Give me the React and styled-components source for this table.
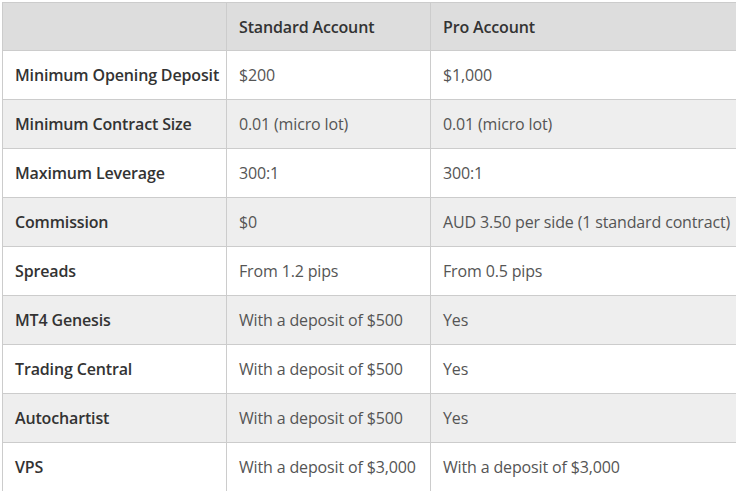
import React from "react";
import styled, { createGlobalStyle } from "styled-components";

const GlobalStyle = createGlobalStyle`
  html, body {
    margin: 0;
    padding: 0;
    background: #fff;
    overflow: hidden;
  }
  body {
    font-family: "Open Sans", "Liberation Sans", sans-serif;
  }
`;

const Wrap = styled.div`
  padding: 2px 0 0 2px;
  width: 736px;
  height: 491px;
  box-sizing: border-box;
  overflow: hidden;
`;

const Table = styled.table`
  border-collapse: collapse;
  table-layout: fixed;
  width: 750px;
  font-size: 16px;
  color: #555;
`;

const Col = styled.col`
  width: ${(p) => p.$w}px;
`;

const Row = styled.tr`
  height: ${(p) => (p.$head ? 48 : 49)}px;
  background: ${(p) => (p.$head ? "#dddddd" : p.$alt ? "#eeeeee" : "#ffffff")};
`;

const Cell = styled.td`
  border: 1px solid #cccccc;
  padding: 0 12px;
  white-space: nowrap;
  font-weight: ${(p) => (p.$bold ? 600 : 400)};
  color: ${(p) => (p.$bold ? "#333" : "#555")};
  letter-spacing: -0.15px;
`;

const rows = [
  ["Minimum Opening Deposit", "$200", "$1,000"],
  ["Minimum Contract Size", "0.01 (micro lot)", "0.01 (micro lot)"],
  ["Maximum Leverage", "300:1", "300:1"],
  ["Commission", "$0", "AUD 3.50 per side (1 standard contract)"],
  ["Spreads", "From 1.2 pips", "From 0.5 pips"],
  ["MT4 Genesis", "With a deposit of $500", "Yes"],
  ["Trading Central", "With a deposit of $500", "Yes"],
  ["Autochartist", "With a deposit of $500", "Yes"],
  ["VPS", "With a deposit of $3,000", "With a deposit of $3,000"],
];

export default function App() {
  return (
    <Wrap>
      <GlobalStyle />
      <Table>
        <colgroup>
          <Col $w={224} />
          <Col $w={204} />
          <Col $w={322} />
        </colgroup>
        <thead>
          <Row $head>
            <Cell />
            <Cell $bold>Standard Account</Cell>
            <Cell $bold>Pro Account</Cell>
          </Row>
        </thead>
        <tbody>
          {rows.map((r, i) => (
            <Row key={r[0]} $alt={i % 2 === 1}>
              <Cell $bold>{r[0]}</Cell>
              <Cell>{r[1]}</Cell>
              <Cell>{r[2]}</Cell>
            </Row>
          ))}
        </tbody>
      </Table>
    </Wrap>
  );
}
